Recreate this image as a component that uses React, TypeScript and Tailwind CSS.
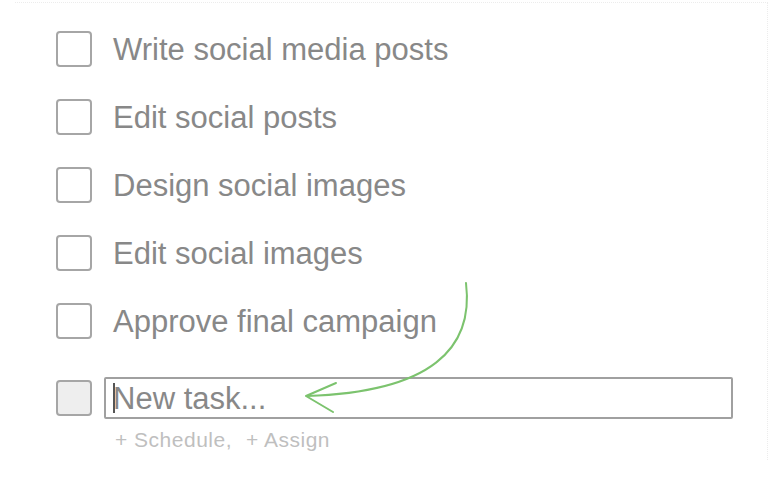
import React from 'react';

const tasks = [
  'Write social media posts',
  'Edit social posts',
  'Design social images',
  'Edit social images',
  'Approve final campaign',
];

const Box: React.FC<{ muted?: boolean }> = ({ muted }) => (
  <span
    className={
      'block w-[36px] h-[36px] shrink-0 rounded-[4px] border-2 border-[#a6a6a6] ' +
      (muted ? 'bg-[#eeeeee]' : 'bg-white')
    }
  />
);

export default function App() {
  return (
    <div
      className="relative w-[770px] h-[480px] bg-white overflow-hidden"
      style={{ fontFamily: '"Liberation Sans", Arial, sans-serif' }}
    >
      <div className="ml-[15px] mt-[2px] w-[753px] h-[458px] border-t border-r border-dotted border-[#ececec]">
        <ul className="pt-[12px] pl-[41px]">
          {tasks.map((t) => (
            <li key={t} className="flex items-center gap-[21px] h-[68px]">
              <Box />
              <span className="text-[31px] text-[#888888] leading-none">{t}</span>
            </li>
          ))}
        </ul>

        <div className="pl-[41px] mt-[22px]">
          <div className="flex items-center gap-[12px]">
            <Box muted />
            <div className="w-[629px] h-[42px] border-2 border-[#a0a0a0] rounded-[2px] flex items-center pl-[7px]">
              <span className="w-[2px] h-[30px] bg-[#555] mr-[-2px]" />
              <span className="text-[31px] text-[#888888] leading-none">New task...</span>
            </div>
          </div>
          <div className="mt-[10px] ml-[59px] flex gap-[14px] text-[21px] tracking-[0.5px] text-[#bfbfbf] leading-none">
            <span>+ Schedule,</span>
            <span>+ Assign</span>
          </div>
        </div>
      </div>

      <svg
        className="absolute left-0 top-0 pointer-events-none"
        width="770"
        height="480"
        viewBox="0 0 770 480"
        fill="none"
      >
        <path
          d="M466 283 C 474 348, 432 392, 307 396"
          stroke="#7cc36e"
          strokeWidth="2"
          strokeLinecap="round"
        />
        <path
          d="M336 383 L 306 396 L 333 412"
          stroke="#7cc36e"
          strokeWidth="2"
          strokeLinecap="round"
          strokeLinejoin="round"
        />
      </svg>
    </div>
  );
}
